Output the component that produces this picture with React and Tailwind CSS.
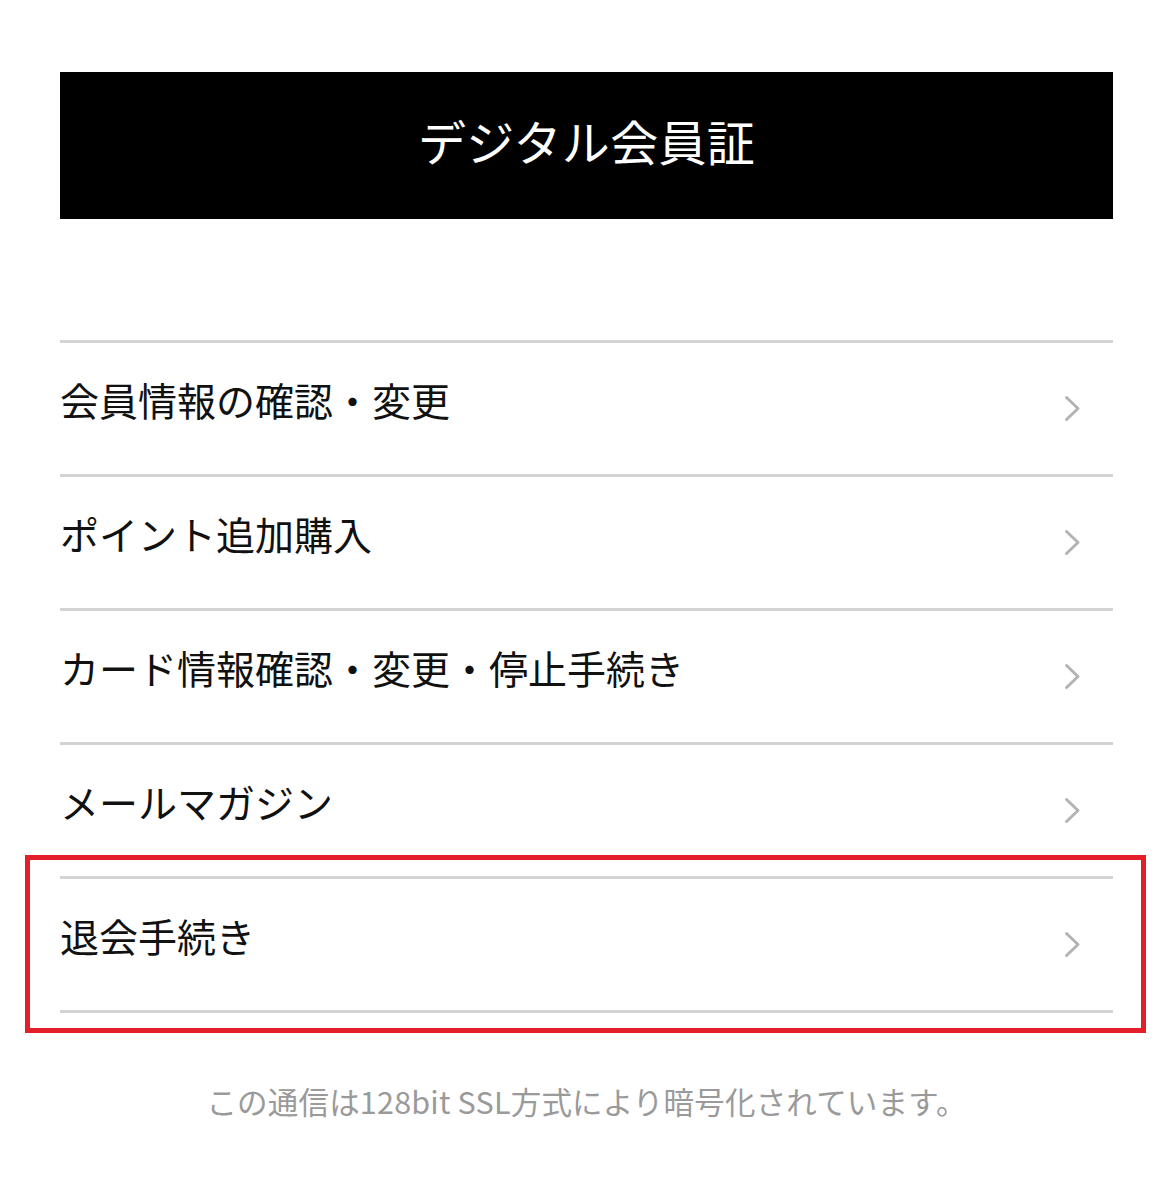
import React from "react";

const items = [
  "会員情報の確認・変更",
  "ポイント追加購入",
  "カード情報確認・変更・停止手続き",
  "メールマガジン",
  "退会手続き",
];

function Chevron() {
  return (
    <svg width="17" height="27" viewBox="0 0 17 27" fill="none" className="shrink-0">
      <polyline
        points="2.5,2.5 14,13.5 2.5,24.5"
        stroke="#b3b3b3"
        strokeWidth="3"
        strokeLinecap="round"
        strokeLinejoin="round"
      />
    </svg>
  );
}

export default function App() {
  return (
    <div
      className="relative w-[1170px] min-h-[1177px] bg-white"
      style={{ fontFamily: '"Noto Sans CJK JP", "Noto Sans", sans-serif' }}
    >
      <div className="ml-[60px] w-[1053px] pt-[72px]">
        <div className="flex h-[147px] items-center justify-center bg-black pb-[12px]">
          <h1 className="text-[48px] font-normal leading-none tracking-[0.3px] text-white">
            デジタル会員証
          </h1>
        </div>

        <ul className="mt-[121px] border-t-[3px] border-[#d3d3d3]">
          {items.map((label) => (
            <li
              key={label}
              className="flex h-[134px] items-center justify-between border-b-[3px] border-[#d3d3d3] pr-[32px]"
            >
              <span className="pb-[18px] text-[39px] leading-none text-[#111]">{label}</span>
              <Chevron />
            </li>
          ))}
        </ul>

        <p className="mt-[68px] text-center text-[30.5px] leading-[40px] tracking-[0.2px] text-[#9a9a9a]">
          この通信は128bit SSL方式により暗号化されています。
        </p>
      </div>

      {/* highlight frame around the withdrawal row */}
      <div className="pointer-events-none absolute left-[25px] top-[855px] h-[178px] w-[1121px] border-[5px] border-[#e3202a]" />
    </div>
  );
}
